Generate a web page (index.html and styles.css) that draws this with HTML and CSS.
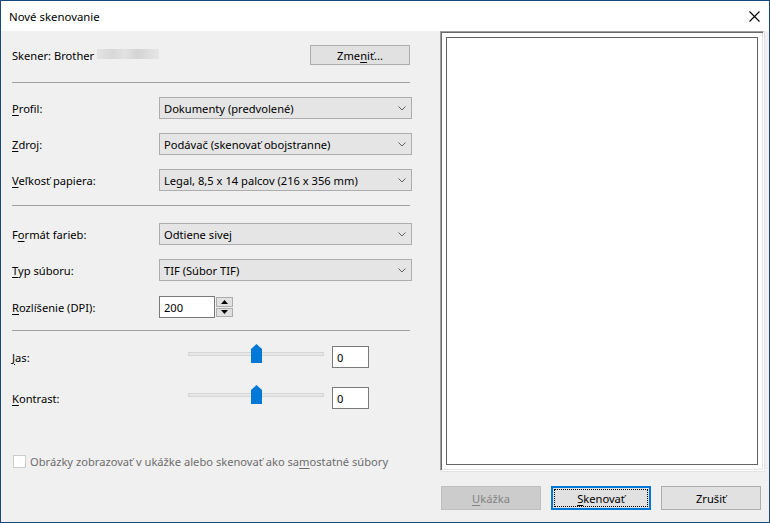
FILE: index.html
```html
<!DOCTYPE html>
<html lang="sk">
<head>
    <meta charset="UTF-8">
    <title>Nové skenovanie</title>
    <link rel="stylesheet" href="styles.css">
</head>
<body>
    <div class="window">
        <div class="titlebar">
            <span class="title">Nové skenovanie</span>
            <svg class="close" width="11" height="11" viewBox="0 0 11 11"><path d="M0.5 0.5 L10.5 10.5 M10.5 0.5 L0.5 10.5" stroke="#000" stroke-width="1.1" fill="none"/></svg>
        </div>

        <div class="main">
            <div class="settings">
                <div class="scanner-row">
                    <span>Skener: Brother</span>
                    <span class="blurred"></span>
                    <button class="btn change-button">Zme<u>n</u>iť...</button>
                </div>

                <div class="sep sep-first"></div>

                <div class="field">
                    <label><u>P</u>rofil:</label>
                    <div class="combo">Dokumenty (predvolené)<svg class="chevron" width="8" height="5" viewBox="0 0 8 5"><path d="M0.5 0.5 L4 4 L7.5 0.5" stroke="#606060" fill="none"/></svg></div>
                </div>
                <div class="field">
                    <label><u>Z</u>droj:</label>
                    <div class="combo">Podávač (skenovať obojstranne)<svg class="chevron" width="8" height="5" viewBox="0 0 8 5"><path d="M0.5 0.5 L4 4 L7.5 0.5" stroke="#606060" fill="none"/></svg></div>
                </div>
                <div class="field">
                    <label><u>V</u>eľkosť papiera:</label>
                    <div class="combo">Legal, 8,5 x 14 palcov (216 x 356 mm)<svg class="chevron" width="8" height="5" viewBox="0 0 8 5"><path d="M0.5 0.5 L4 4 L7.5 0.5" stroke="#606060" fill="none"/></svg></div>
                </div>

                <div class="sep sep-second"></div>

                <div class="field field-first">
                    <label>F<u>o</u>rmát farieb:</label>
                    <div class="combo">Odtiene sivej<svg class="chevron" width="8" height="5" viewBox="0 0 8 5"><path d="M0.5 0.5 L4 4 L7.5 0.5" stroke="#606060" fill="none"/></svg></div>
                </div>
                <div class="field">
                    <label><u>T</u>yp súboru:</label>
                    <div class="combo">TIF (Súbor TIF)<svg class="chevron" width="8" height="5" viewBox="0 0 8 5"><path d="M0.5 0.5 L4 4 L7.5 0.5" stroke="#606060" fill="none"/></svg></div>
                </div>
                <div class="field field-spin">
                    <label><u>R</u>ozlíšenie (DPI):</label>
                    <div class="spin-text">200</div>
                    <div class="spin-buttons">
                        <div class="spin-btn"><svg width="7" height="4" viewBox="0 0 7 4"><path d="M0 4 L3.5 0 L7 4 Z" fill="#000"/></svg></div>
                        <div class="spin-btn"><svg width="7" height="4" viewBox="0 0 7 4"><path d="M0 0 L3.5 4 L7 0 Z" fill="#000"/></svg></div>
                    </div>
                </div>

                <div class="sep sep-third"></div>

                <div class="slider-row slider-first">
                    <label><u>J</u>as:</label>
                    <div class="slider">
                        <div class="track"></div>
                        <svg class="thumb" width="11" height="19" viewBox="0 0 11 19"><path d="M0 5 L5.5 0 L11 5 L11 19 L0 19 Z" fill="#0078d7"/></svg>
                    </div>
                    <div class="value-box">0</div>
                </div>
                <div class="slider-row">
                    <label><u>K</u>ontrast:</label>
                    <div class="slider">
                        <div class="track"></div>
                        <svg class="thumb" width="11" height="19" viewBox="0 0 11 19"><path d="M0 5 L5.5 0 L11 5 L11 19 L0 19 Z" fill="#0078d7"/></svg>
                    </div>
                    <div class="value-box">0</div>
                </div>

                <div class="check-row">
                    <span class="checkbox"></span>
                    <span>Obrázky zobrazovať v ukážke alebo skenovať ako sa<u>m</u>ostatné súbory</span>
                </div>
            </div>

            <div class="preview-side">
                <div class="preview">
                    <div class="preview-inner"></div>
                </div>
                <div class="actions">
                    <button class="btn disabled"><u>U</u>kážka</button>
                    <button class="btn default-button"><u>S</u>kenovať</button>
                    <button class="btn">Zrušiť</button>
                </div>
            </div>
        </div>
    </div>
</body>
</html>
```

FILE: styles.css
```css
* {
    box-sizing: border-box;
}

body {
    margin: 0;
    font-family: "Noto Sans", "Liberation Sans", sans-serif;
    font-size: 11.15px;
    color: #000;
    background: #f0f0f0;
}

u {
    text-decoration: underline;
    text-underline-offset: 2px;
}

.window {
    width: 770px;
    height: 523px;
    border: 1px solid #19487a;
    background: #f0f0f0;
    display: flex;
    flex-direction: column;
}

.titlebar {
    height: 30px;
    background: #fff;
    display: flex;
    align-items: center;
    padding-left: 8px;
    font-size: 11.4px;
}

.title {
    flex: 1;
}

.close {
    margin-right: 9px;
}

.main {
    flex: 1;
    display: flex;
}

/* lavy panel s nastaveniami */
.settings {
    width: 439px;
    padding: 14px 28px 0 11px;
    display: flex;
    flex-direction: column;
}

.scanner-row {
    height: 20px;
    display: flex;
    align-items: center;
}

.blurred {
    width: 62px;
    height: 10px;
    margin-left: 3px;
    margin-top: -3px;
    background: linear-gradient(90deg, #e4e4e4, #d8d8d8 25%, #e2e2e2 45%, #d4d4d4 65%, #dedede 85%, #e6e6e6);
}

.btn {
    width: 100px;
    height: 24px;
    padding: 0;
    background: #e1e1e1;
    border: 1px solid #adadad;
    font-family: inherit;
    font-size: 11.15px;
    color: #000;
}

.change-button {
    height: 20px;
    margin-left: auto;
    margin-right: 2px;
}

.sep {
    height: 1px;
    background: #a0a0a0;
    margin-right: 2px;
}

.sep-first {
    margin-top: 17px;
}

.sep-second {
    margin-top: 14px;
}

.sep-third {
    margin-top: 12px;
}

.field {
    display: flex;
    align-items: center;
    height: 22px;
    margin-top: 14px;
}

.field-first {
    margin-top: 17px;
}

.field-spin {
    margin-top: 15px;
}

.field label {
    width: 147px;
}

.combo {
    width: 253px;
    height: 22px;
    background: #e5e5e5;
    border: 1px solid #adadad;
    display: flex;
    align-items: center;
    padding-left: 4px;
}

.chevron {
    margin-left: auto;
    margin-right: 5px;
}

.spin-text {
    width: 56px;
    height: 22px;
    background: #fff;
    border: 1px solid #7a7a7a;
    display: flex;
    align-items: center;
    padding-left: 4px;
}

.spin-buttons {
    width: 17px;
    height: 22px;
    margin-left: 1px;
    display: flex;
    flex-direction: column;
    gap: 1px;
    padding: 1px 0;
}

.spin-btn {
    flex: 1;
    background: #e1e1e1;
    border: 1px solid #adadad;
    display: flex;
    align-items: center;
    justify-content: center;
}

.slider-row {
    display: flex;
    align-items: center;
    height: 22px;
    margin-top: 19px;
}

.slider-first {
    margin-top: 15px;
}

.slider-row label {
    width: 176px;
}

.slider {
    width: 136px;
    height: 22px;
    position: relative;
}

.track {
    margin-top: 6px;
    height: 4px;
    background: #e7e7e7;
    border: 1px solid #d6d6d6;
}

.thumb {
    position: absolute;
    left: 63px;
    top: -2px;
}

.value-box {
    width: 37px;
    height: 22px;
    margin-left: 8px;
    background: #fff;
    border: 1px solid #7a7a7a;
    display: flex;
    align-items: center;
    padding-left: 4px;
}

.check-row {
    display: flex;
    align-items: center;
    height: 13px;
    margin-top: 46px;
    color: #6d6d6d;
}

.checkbox {
    width: 13px;
    height: 13px;
    margin-left: 1px;
    margin-right: 4px;
    background: #fff;
    border: 1px solid #cccccc;
}

/* pravy panel s nahladom */
.preview-side {
    width: 329px;
    display: flex;
    flex-direction: column;
}

.preview {
    width: 324px;
    height: 440px;
    background: #fff;
    border-top: 1px solid #a0a0a0;
    border-left: 1px solid #a0a0a0;
    border-right: 1px solid #fff;
    border-bottom: 1px solid #fff;
    box-shadow: inset 1px 1px 0 #696969, inset -1px -1px 0 #e3e3e3, 1px 1px 0 #e3e3e3;
    padding: 5px;
}

.preview-inner {
    width: 100%;
    height: 100%;
    border: 1px solid #646464;
}

.actions {
    margin-top: 15px;
    padding-left: 1px;
    display: flex;
    gap: 10px;
}

.disabled {
    background: #cccccc;
    border-color: #bfbfbf;
    color: #838383;
}

.default-button {
    border-color: #0078d7;
    box-shadow: inset 0 0 0 1px #0078d7;
    outline: 1px dotted #000;
    outline-offset: -4px;
}
```
